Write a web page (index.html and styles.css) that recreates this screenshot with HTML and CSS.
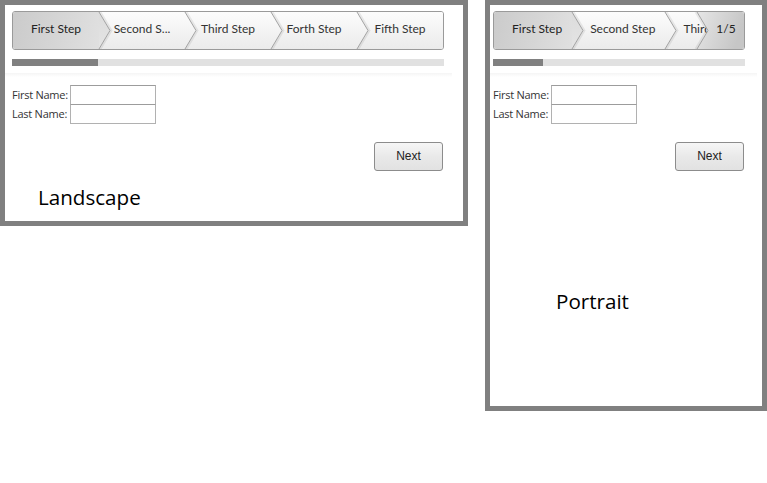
FILE: index.html
```html
<!DOCTYPE html>
<html>
<head>
<meta charset="utf-8">
<title>Wizard</title>
<link rel="stylesheet" href="styles.css">
</head>
<body>
<svg class="defs" width="0" height="0" aria-hidden="true">
  <defs>
    <linearGradient id="gStep" x1="0" y1="0" x2="0" y2="1">
      <stop offset="0" stop-color="#fcfcfc"/>
      <stop offset="1" stop-color="#ebebeb"/>
    </linearGradient>
    <linearGradient id="gSel" x1="0" y1="0" x2="0" y2="1">
      <stop offset="0" stop-color="#dcdcdc"/>
      <stop offset="1" stop-color="#e4e4e4"/>
    </linearGradient>
    <linearGradient id="gOver" x1="0" y1="0" x2="1" y2="0.3">
      <stop offset="0" stop-color="#e6e6e6"/>
      <stop offset="1" stop-color="#c6c6c6"/>
    </linearGradient>
  </defs>
</svg>
<div class="stage">
  <section class="frame landscape">
    <div class="bar">
      <div class="step selected"><span>First Step</span>
        <svg class="tip" width="13" height="37" viewBox="0 0 13 37"><polygon points="0,0 11,18.5 0,37" fill="url(#gSel)"/><polyline class="shade" points="1.5,0 12.5,18.5 1.5,37"/><polyline class="edge" points="0,0 11,18.5 0,37"/></svg></div>
      <div class="step"><span>Second S...</span>
        <svg class="tip" width="13" height="37" viewBox="0 0 13 37"><polygon points="0,0 11,18.5 0,37" fill="url(#gStep)"/><polyline class="shade" points="1.5,0 12.5,18.5 1.5,37"/><polyline class="edge" points="0,0 11,18.5 0,37"/></svg></div>
      <div class="step"><span>Third Step</span>
        <svg class="tip" width="13" height="37" viewBox="0 0 13 37"><polygon points="0,0 11,18.5 0,37" fill="url(#gStep)"/><polyline class="shade" points="1.5,0 12.5,18.5 1.5,37"/><polyline class="edge" points="0,0 11,18.5 0,37"/></svg></div>
      <div class="step"><span>Forth Step</span>
        <svg class="tip" width="13" height="37" viewBox="0 0 13 37"><polygon points="0,0 11,18.5 0,37" fill="url(#gStep)"/><polyline class="shade" points="1.5,0 12.5,18.5 1.5,37"/><polyline class="edge" points="0,0 11,18.5 0,37"/></svg></div>
      <div class="step"><span>Fifth Step</span></div>
    </div>
    <div class="progress"><div class="progress-fill" style="width:20%"></div></div>
    <div class="sep"></div>
    <form class="fields">
      <label>First Name:</label><input type="text">
      <label>Last Name:</label><input type="text">
    </form>
    <div class="actions"><button type="button">Next</button></div>
    <div class="caption">Landscape</div>
  </section>

  <section class="frame portrait">
    <div class="bar">
      <div class="step selected"><span>First Step</span>
        <svg class="tip" width="13" height="37" viewBox="0 0 13 37"><polygon points="0,0 11,18.5 0,37" fill="url(#gSel)"/><polyline class="shade" points="1.5,0 12.5,18.5 1.5,37"/><polyline class="edge" points="0,0 11,18.5 0,37"/></svg></div>
      <div class="step"><span>Second Step</span>
        <svg class="tip" width="13" height="37" viewBox="0 0 13 37"><polygon points="0,0 11,18.5 0,37" fill="url(#gStep)"/><polyline class="shade" points="1.5,0 12.5,18.5 1.5,37"/><polyline class="edge" points="0,0 11,18.5 0,37"/></svg></div>
      <div class="step"><span>Third Step</span>
        <svg class="tip" width="13" height="37" viewBox="0 0 13 37"><polygon points="0,0 11,18.5 0,37" fill="url(#gStep)"/><polyline class="shade" points="1.5,0 12.5,18.5 1.5,37"/><polyline class="edge" points="0,0 11,18.5 0,37"/></svg></div>
      <div class="step"><span>Forth Step</span></div>
      <div class="overflow">
        <svg class="overflow-shape" width="47" height="37" viewBox="0 0 47 37"><polygon points="0,0 47,0 47,37 0,37 11,18.5" fill="url(#gOver)"/><polyline class="shade" points="-1.5,0 9.5,18.5 -1.5,37"/><polyline class="edge" points="0,0 11,18.5 0,37"/></svg>
        <span>1/5</span>
      </div>
    </div>
    <div class="progress"><div class="progress-fill" style="width:20%"></div></div>
    <div class="sep"></div>
    <form class="fields">
      <label>First Name:</label><input type="text">
      <label>Last Name:</label><input type="text">
    </form>
    <div class="actions"><button type="button">Next</button></div>
    <div class="caption">Portrait</div>
  </section>
</div>
</body>
</html>
```
FILE: styles.css
```css
html, body {
  margin: 0;
  padding: 0;
  background: #ffffff;
}

body {
  font-family: "Open Sans", "Noto Sans", sans-serif;
  color: #333333;
}

.defs {
  position: absolute;
  width: 0;
  height: 0;
}

.stage {
  display: flex;
  align-items: flex-start;
  gap: 17px;
}

.frame {
  box-sizing: border-box;
  border: 5px solid #808080;
  background: #ffffff;
  display: flex;
  flex-direction: column;
}

.landscape {
  width: 468px;
  height: 226px;
  padding: 6px 19px 0 7px;
}

.portrait {
  width: 282px;
  height: 411px;
  padding: 6px 17px 0 3px;
}

/* step bar */
.bar {
  position: relative;
  box-sizing: border-box;
  height: 39px;
  border: 1px solid #9a9a9a;
  border-radius: 3px;
  overflow: hidden;
  display: flex;
  flex: none;
}

.step {
  position: relative;
  flex: none;
  box-sizing: border-box;
  height: 37px;
  display: flex;
  align-items: center;
  font-family: Lato, "Open Sans", sans-serif;
  font-size: 12px;
  color: #333333;
  white-space: nowrap;
  background: linear-gradient(#fcfcfc, #ebebeb);
}

.step span {
  position: relative;
  top: -2px;
}

.step.selected {
  background: linear-gradient(100deg, #cbcbcb 0%, #d6d6d6 55%, #e0e0e0 100%);
  color: #222222;
}

.step:nth-child(1) { z-index: 5; }
.step:nth-child(2) { z-index: 4; }
.step:nth-child(3) { z-index: 3; }
.step:nth-child(4) { z-index: 2; }
.step:nth-child(5) { z-index: 1; }

.landscape .step {
  width: 86px;
  justify-content: center;
}

.portrait .step {
  padding: 0 10px 0 18px;
}

.tip {
  position: absolute;
  left: 100%;
  top: 0;
  overflow: visible;
}

.edge {
  fill: none;
  stroke: #a2a2a2;
  stroke-width: 1;
}

.shade {
  fill: none;
  stroke: rgba(0, 0, 0, 0.07);
  stroke-width: 2;
}

.overflow {
  position: absolute;
  top: 0;
  right: 0;
  z-index: 10;
  width: 47px;
  height: 37px;
  box-sizing: border-box;
  padding-left: 11px;
  display: flex;
  align-items: center;
  justify-content: center;
  font-family: Lato, "Open Sans", sans-serif;
  font-size: 12px;
  color: #222222;
}

.overflow-shape {
  position: absolute;
  left: 0;
  top: 0;
  overflow: visible;
}

.overflow span {
  position: relative;
  top: -2px;
}

/* progress */
.progress {
  margin-top: 9px;
  height: 7px;
  background: #e1e1e1;
  flex: none;
}

.progress-fill {
  height: 100%;
  background: #808080;
}

.sep {
  flex: none;
  height: 4px;
  margin: 7px -8px 0 -7px;
  background: linear-gradient(#f5f5f5, rgba(255, 255, 255, 0));
}

.portrait .sep {
  margin: 7px -12px 0 -3px;
}

/* form */
.fields {
  margin: 8px 0 0 0;
  display: grid;
  grid-template-columns: 58px 86px;
  grid-auto-rows: 19px;
  flex: none;
}

.fields label {
  font-size: 11px;
  letter-spacing: -0.25px;
  line-height: 19px;
  color: #333333;
  white-space: nowrap;
}

.fields input {
  -webkit-appearance: none;
  appearance: none;
  box-sizing: border-box;
  width: 86px;
  height: 20px;
  margin: 0;
  padding: 0;
  border: 1px solid #b1b1b1;
  border-top-color: #9c9c9c;
  border-radius: 0;
  background: #ffffff;
  outline: none;
}

.actions {
  margin-top: 19px;
  padding-right: 1px;
  display: flex;
  justify-content: flex-end;
  flex: none;
}

.actions button {
  width: 69px;
  height: 29px;
  box-sizing: border-box;
  margin: 0;
  padding: 0 0 2px 0;
  border: 1px solid #8c8c8c;
  border-radius: 3px;
  background: linear-gradient(#f6f6f6, #e9e9e9 50%, #e2e2e2);
  font-family: "Liberation Sans", Arial, sans-serif;
  font-size: 12px;
  color: #222222;
}

.caption {
  font-family: "Open Sans", "Noto Sans", sans-serif;
  font-size: 20.6px;
  line-height: 20px;
  color: #000000;
  flex: none;
}

.landscape .caption {
  margin: 16px 0 0 26px;
}

.portrait .caption {
  margin: 120px 0 0 63px;
}
```
